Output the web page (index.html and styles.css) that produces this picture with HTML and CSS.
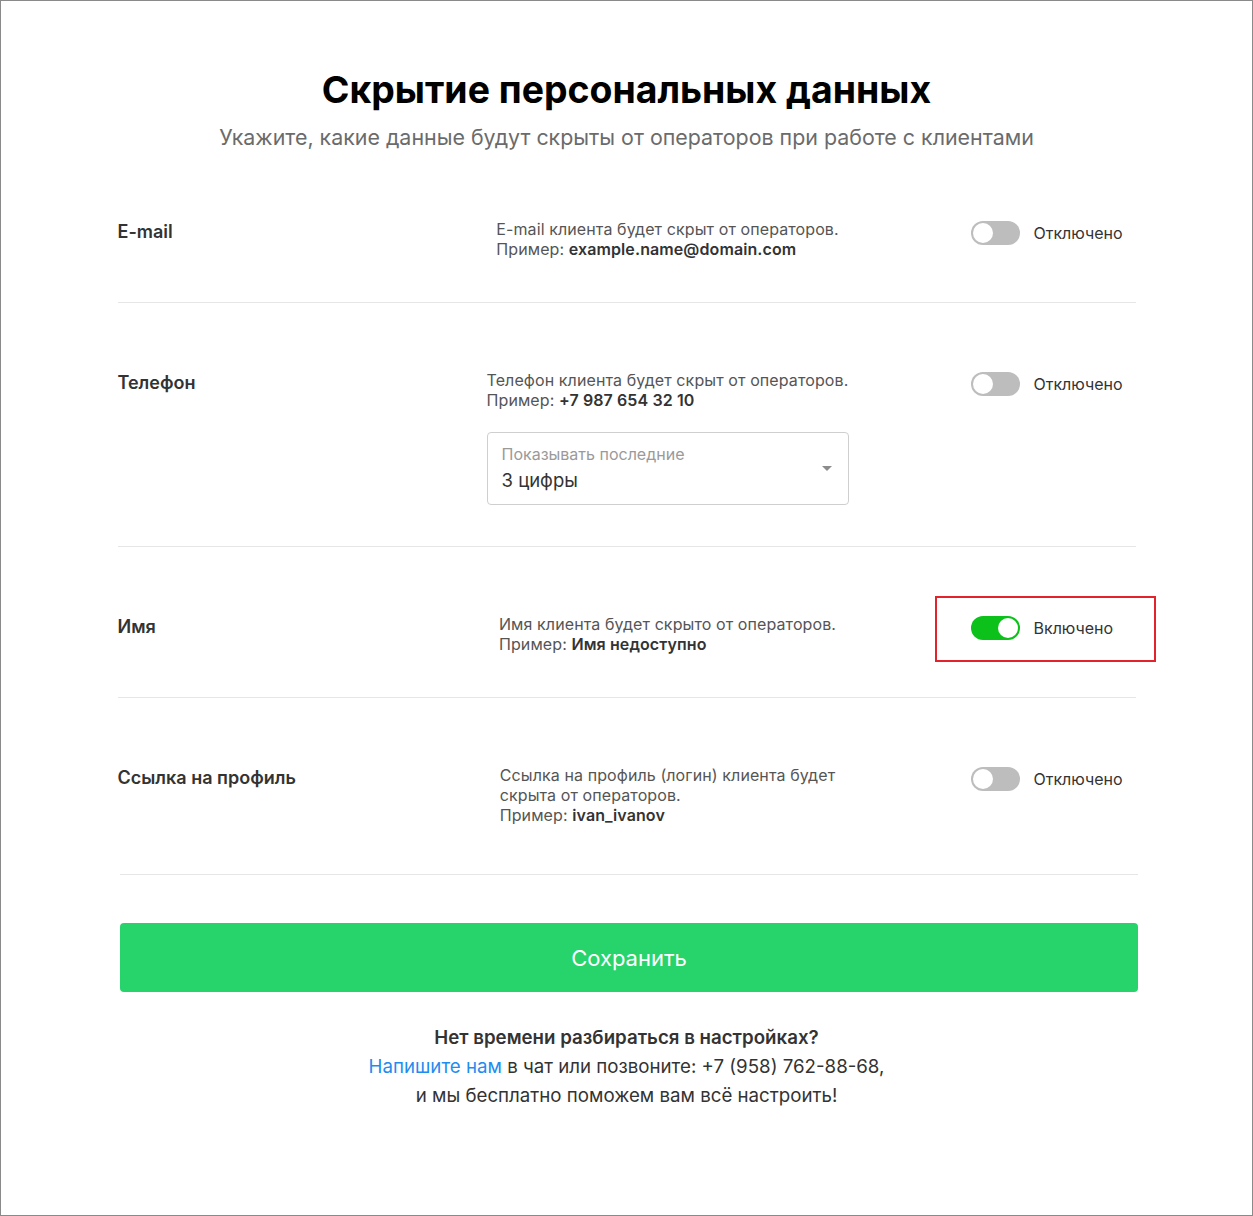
FILE: index.html
```html
<!DOCTYPE html>
<html lang="ru">
<head>
<meta charset="utf-8">
<title>Скрытие персональных данных</title>
<link rel="stylesheet" href="styles.css">
</head>
<body>
<div class="page">
  <header class="head">
    <h1 class="title">Скрытие персональных данных</h1>
    <p class="subtitle">Укажите, какие данные будут скрыты от операторов при работе с клиентами</p>
  </header>

  <section class="list">
    <div class="row">
      <div class="label">E-mail</div>
      <div class="desc">
        <p class="desc-text">E-mail клиента будет скрыт от операторов.<br>Пример: <b>example.name@domain.com</b></p>
      </div>
      <div class="state">
        <span class="switch"><span class="knob"></span></span>
        <span class="state-text">Отключено</span>
      </div>
    </div>

    <div class="row row-phone">
      <div class="label">Телефон</div>
      <div class="desc">
        <p class="desc-text">Телефон клиента будет скрыт от операторов.<br>Пример: <b>+7 987 654 32 10</b></p>
        <div class="select">
          <span class="select-label">Показывать последние</span>
          <span class="select-value">3 цифры</span>
          <span class="caret"></span>
        </div>
      </div>
      <div class="state">
        <span class="switch"><span class="knob"></span></span>
        <span class="state-text">Отключено</span>
      </div>
    </div>

    <div class="row">
      <div class="label">Имя</div>
      <div class="desc">
        <p class="desc-text">Имя клиента будет скрыто от операторов.<br>Пример: <b>Имя недоступно</b></p>
      </div>
      <div class="state state-marked">
        <span class="switch switch-on"><span class="knob"></span></span>
        <span class="state-text">Включено</span>
      </div>
    </div>

    <div class="row row-last">
      <div class="label">Ссылка на профиль</div>
      <div class="desc">
        <p class="desc-text">Ссылка на профиль (логин) клиента будет<br>скрыта от операторов.<br>Пример: <b>ivan_ivanov</b></p>
      </div>
      <div class="state">
        <span class="switch"><span class="knob"></span></span>
        <span class="state-text">Отключено</span>
      </div>
    </div>
  </section>

  <div class="actions">
    <button class="save" type="button">Сохранить</button>
  </div>

  <footer class="help">
    <p class="help-title">Нет времени разбираться в настройках?</p>
    <p class="help-text"><a class="link" href="#">Напишите нам</a> в чат или позвоните: +7 (958) 762-88-68,<br>и мы бесплатно поможем вам всё настроить!</p>
  </footer>
</div>
</body>
</html>
```

FILE: styles.css
```css
*, *::before, *::after { box-sizing: border-box; }
html, body { margin: 0; padding: 0; background: #fff; }
body {
  font-family: Inter, "Noto Sans", "Liberation Sans", sans-serif;
  color: #333;
}
.page {
  width: 1253px;
  height: 1216px;
  border: 1px solid #8a8a8a;
  overflow: hidden;
}
.head {
  padding-top: 67px;
  padding-bottom: 1px;
  text-align: center;
}
.title {
  margin: 0;
  font-size: 37.4px;
  line-height: 44px;
  font-weight: 700;
  color: #000;
}
.subtitle {
  margin: 11px 0 0;
  font-size: 21.4px;
  line-height: 28px;
  color: #6b6b6b;
}
.list {
  width: 1018px;
  margin: 0 auto;
}
.list::after {
  content: "";
  display: block;
  height: 1px;
  background: #e6e6e6;
  margin-left: 2px;
  margin-right: -2px;
}
.row {
  display: grid;
  grid-template-columns: 340px 420px 1fr;
  align-items: start;
  padding: 67px 0 43px;
  border-bottom: 1px solid #e6e6e6;
}
.row-phone { padding-bottom: 41px; }
.row-last { padding-bottom: 49px; border-bottom: 0; }
.label {
  margin-top: 1px;
  font-size: 18px;
  line-height: 24px;
  font-weight: 600;
  color: #333;
}
.desc {
  justify-self: center;
  display: flex;
  flex-direction: column;
}
.desc-text {
  margin: 0;
  font-size: 16px;
  line-height: 20px;
  color: #555;
  letter-spacing: 0.1px;
}
.desc-text b { color: #333; font-weight: 600; }
.select {
  position: relative;
  margin-top: 22px;
  width: 362px;
  height: 73px;
  border: 1px solid #cfcfcf;
  border-radius: 4px;
  padding: 11px 14px 0;
  display: flex;
  flex-direction: column;
}
.select-label {
  font-size: 16px;
  line-height: 21px;
  color: #9a9a9a;
}
.select-value {
  margin-top: 3px;
  font-size: 18.5px;
  line-height: 24px;
  color: #333;
}
.caret {
  position: absolute;
  right: 16px;
  top: 33px;
  width: 0;
  height: 0;
  border-left: 5.5px solid transparent;
  border-right: 5.5px solid transparent;
  border-top: 5.5px solid #8c8c8c;
}
.state {
  display: flex;
  align-items: center;
  gap: 14px;
  margin-left: 93px;
  margin-top: 2px;
  width: fit-content;
}
.state-marked { position: relative; }
.state-marked::after {
  content: "";
  position: absolute;
  left: -36px;
  top: -20px;
  width: 221px;
  height: 66px;
  border: 2px solid #e3232b;
}
.switch {
  display: flex;
  align-items: center;
  width: 49px;
  height: 24px;
  border-radius: 12px;
  background: #bdbdbd;
  padding: 0 2px;
}
.knob {
  width: 20px;
  height: 20px;
  border-radius: 50%;
  background: #fff;
}
.switch-on { background: #0cc21a; justify-content: flex-end; }
.state-text {
  font-size: 16px;
  line-height: 20px;
  color: #333;
}
.actions {
  width: 1018px;
  margin: 48px 0 0 119px;
}
.save {
  display: block;
  width: 1018px;
  height: 69px;
  border: 0;
  border-radius: 4px;
  background: #27d46b;
  color: #fff;
  font-family: inherit;
  font-size: 22px;
  font-weight: 400;
  cursor: pointer;
}
.help {
  margin-top: 31px;
  text-align: center;
  font-size: 18.7px;
  line-height: 29px;
  color: #333;
}
.help p { margin: 0; }
.help-title { font-weight: 600; }
.link { color: #1e8cf0; text-decoration: none; }
```
